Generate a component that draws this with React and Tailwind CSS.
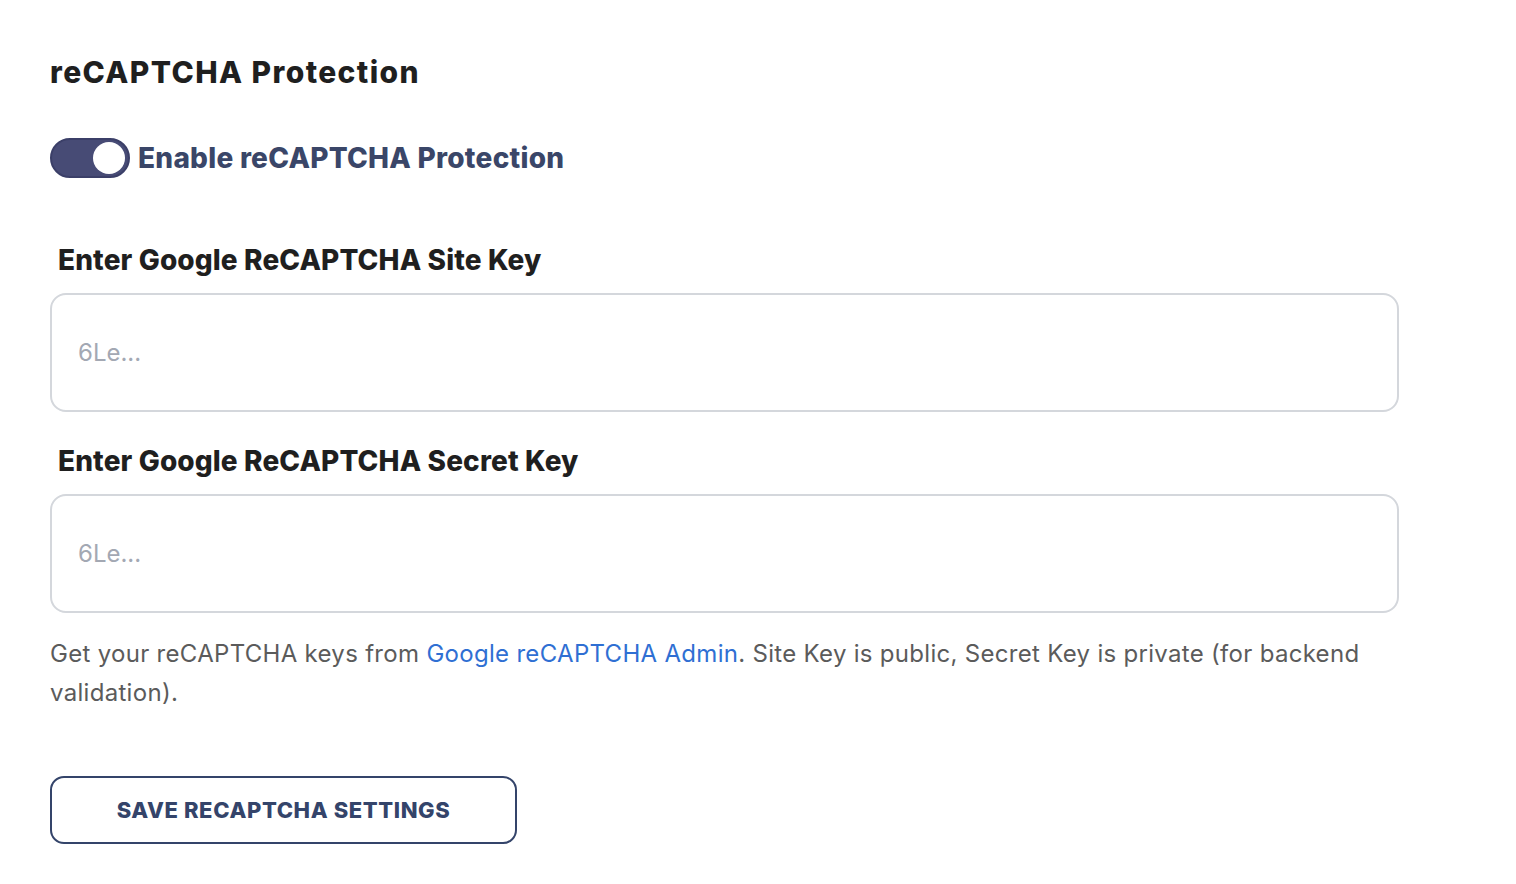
export default function App() {
  return (
    <div className="min-h-screen bg-white px-[50px] pt-[52px] pb-10 font-['Inter',sans-serif]">
      <h2 className="text-[30px] leading-[40px] font-extrabold tracking-[1.4px] text-[#1f1f1f]">reCAPTCHA Protection</h2>

      <div className="mt-[46px] flex items-center gap-2 h-10">
        <button className="relative w-20 h-10 rounded-full bg-[#474b75] border-2 border-[#3b3f68] flex items-center justify-end px-[3px]">
          <span className="block w-[32px] h-[32px] rounded-full bg-white" />
        </button>
        <span className="text-[28px] font-extrabold tracking-[0.26px] text-[#3a4668]">Enable reCAPTCHA Protection</span>
      </div>

      <label className="block mt-[62px] pl-2 text-[28px] leading-[40px] font-extrabold tracking-[0.12px] text-[#1f1f1f]">
        Enter Google ReCAPTCHA Site Key
      </label>
      <input
        className="mt-[13px] block w-[1349px] h-[119px] rounded-2xl border-2 border-[#d4d7dc] px-[26px] text-[24px] text-gray-800 placeholder:text-[#a3a8b3] outline-none"
        placeholder="6Le..."
      />

      <label className="block mt-[29px] pl-2 text-[28px] leading-[40px] font-extrabold tracking-[0.12px] text-[#1f1f1f]">
        Enter Google ReCAPTCHA Secret Key
      </label>
      <input
        className="mt-[13px] block w-[1349px] h-[119px] rounded-2xl border-2 border-[#d4d7dc] px-[26px] text-[24px] text-gray-800 placeholder:text-[#a3a8b3] outline-none"
        placeholder="6Le..."
      />

      <p className="mt-[21px] max-w-[1330px] text-[24px] leading-[39px] tracking-[0.3px] text-[#5b5b5b]">
        Get your reCAPTCHA keys from <a href="#" className="text-[#2f6fd3]">Google reCAPTCHA Admin</a>. Site Key is public, Secret Key is private (for backend validation).
      </p>

      <button className="mt-[64px] w-[467px] h-[68px] rounded-[14px] border-2 border-[#34446a] text-[22px] font-extrabold tracking-[0.6px] text-[#34446a] uppercase">
        Save reCAPTCHA Settings
      </button>
    </div>
  );
}
